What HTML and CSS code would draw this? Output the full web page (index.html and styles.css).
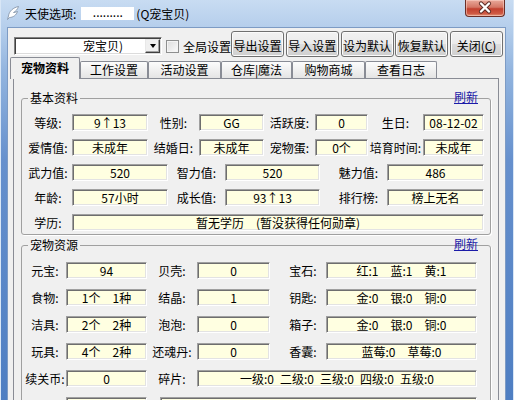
FILE: index.html
```html
<!DOCTYPE html>
<html lang="zh-CN">
<head>
<meta charset="utf-8">
<title>天使选项</title>
<link rel="stylesheet" href="styles.css">
</head>
<body>
<div class="window">
  <div class="titlebar">
    <svg class="appicon" width="16" height="16" viewBox="0 0 16 16">
      <path d="M13.5 1.5 C8.5 2.5 4 6 3.5 11 L2.5 14.5 L4.5 12.5 C8 12.5 11.5 10 12.5 6.5 C11 7.2 9.5 7.5 8.5 7.5 C10.5 6.5 12.5 4.5 13.5 1.5 Z" fill="#ffffff" stroke="#7d8ea3" stroke-width="0.8"/>
    </svg>
    <span class="title">天使选项:</span><span class="redact">.........</span><span class="title">(Q宠宝贝)</span>
    <div class="closebtn">
      <svg width="40" height="17" viewBox="0 0 40 17">
        <path d="M16 4.5 L24 12.5 M24 4.5 L16 12.5" stroke="#5a2a24" stroke-width="4.2" stroke-linecap="round"/>
        <path d="M16 4.5 L24 12.5 M24 4.5 L16 12.5" stroke="#ffffff" stroke-width="2.4" stroke-linecap="round"/>
      </svg>
    </div>
  </div>
  <div class="framebody">
    <div class="client">
      <div class="toolbar">
        <div class="combo"><span class="combo-text">宠宝贝)</span><span class="combo-btn"><span class="arrow"></span></span></div>
        <div class="check"><span class="box"></span><span>全局设置</span></div>
        <div class="btns">
          <button class="btn">导出设置</button>
          <button class="btn">导入设置</button>
          <button class="btn">设为默认</button>
          <button class="btn">恢复默认</button>
          <button class="btn">关闭(<u>C</u>)</button>
        </div>
      </div>
      <div class="tabs">
        <div class="tab sel t1">宠物资料</div>
        <div class="tab t2">工作设置</div>
        <div class="tab t3">活动设置</div>
        <div class="tab t4">仓库|魔法</div>
        <div class="tab t5">购物商城</div>
        <div class="tab t6">查看日志</div>
      </div>
      <div class="panel">
        <fieldset class="group g1">
          <legend>基本资料</legend>
          <a class="refresh">刷新</a>
          <div class="rows">
            <div class="r">
              <span class="l la">等级:</span><span class="f fa">9↑13</span>
              <span class="l lb">性别:</span><span class="f fb">GG</span>
              <span class="l lb">活跃度:</span><span class="f fc">0</span>
              <span class="l lc">生日:</span><span class="f fd">08-12-02</span>
            </div>
            <div class="r">
              <span class="l la">爱情值:</span><span class="f fa">未成年</span>
              <span class="l lb">结婚日:</span><span class="f fb">未成年</span>
              <span class="l lb">宠物蛋:</span><span class="f fc">0个</span>
              <span class="l lc">培育时间:</span><span class="f fd">未成年</span>
            </div>
            <div class="r">
              <span class="l la">武力值:</span><span class="f fe">520</span>
              <span class="l ld">智力值:</span><span class="f ff">520</span>
              <span class="l le">魅力值:</span><span class="f fg">486</span>
            </div>
            <div class="r">
              <span class="l la">年龄:</span><span class="f fe">57小时</span>
              <span class="l ld">成长值:</span><span class="f ff">93↑13</span>
              <span class="l le">排行榜:</span><span class="f fg">榜上无名</span>
            </div>
            <div class="r">
              <span class="l la">学历:</span><span class="f fh">暂无学历&#12288;(暂没获得任何勋章)</span>
            </div>
          </div>
        </fieldset>
        <fieldset class="group g2">
          <legend>宠物资源</legend>
          <a class="refresh">刷新</a>
          <div class="grid">
            <span class="l">元宝:</span><span class="f">94</span>
            <span class="l">贝壳:</span><span class="f">0</span>
            <span class="l l3">宝石:</span><span class="f">红:1&#12288;蓝:1&#12288;黄:1</span>

            <span class="l">食物:</span><span class="f">1个&#12288;1种</span>
            <span class="l">结晶:</span><span class="f">1</span>
            <span class="l l3">钥匙:</span><span class="f">金:0&#12288;银:0&#12288;铜:0</span>

            <span class="l">洁具:</span><span class="f">2个&#12288;2种</span>
            <span class="l">泡泡:</span><span class="f">0</span>
            <span class="l l3">箱子:</span><span class="f">金:0&#12288;银:0&#12288;铜:0</span>

            <span class="l">玩具:</span><span class="f">4个&#12288;2种</span>
            <span class="l">还魂丹:</span><span class="f">0</span>
            <span class="l l3">香囊:</span><span class="f">蓝莓:0&#12288;草莓:0</span>

            <span class="l">续关币:</span><span class="f">0</span>
            <span class="l">碎片:</span><span class="f span">一级:0&ensp;二级:0&ensp;三级:0&ensp;四级:0&ensp;五级:0</span>

            <span class="l"></span><span class="f"></span>
            <span class="f wide"></span>
          </div>
        </fieldset>
      </div>
    </div>
  </div>
</div>
</body>
</html>
```
FILE: styles.css
```css
* { box-sizing: border-box; }
html, body { margin: 0; padding: 0; }
body {
  width: 514px;
  height: 400px;
  overflow: hidden;
  font-family: "Noto Sans CJK SC", "Liberation Sans", sans-serif;
  font-size: 12px;
  color: #000;
  background: #4d7dc2;
}
.window {
  width: 514px;
  height: 400px;
  display: flex;
  flex-direction: column;
  background: linear-gradient(180deg, #c8dcf2 0, #b6cfec 26px, #93b5df 70px, #6690cd 160px, #4e7ec2 400px);
  box-shadow: inset 1px 0 0 #d8e6f6, inset -1px 0 0 #d8e6f6;
}
.titlebar {
  flex: none;
  height: 27px;
  display: flex;
  align-items: center;
  padding-left: 5px;
}
.appicon { flex: none; margin-top: -1px; }
.title { line-height: 14px; white-space: pre; }
.appicon + .title { margin-left: 4px; }
.redact {
  display: inline-block;
  width: 53px;
  height: 13px;
  margin: 0 2px 0 5px;
  background: #fff;
  line-height: 10px;
  text-align: center;
  white-space: nowrap;
}
.closebtn {
  margin-left: auto;
  margin-right: 9px;
  align-self: flex-start;
  width: 40px;
  height: 17px;
  border: 1px solid #6b2f28;
  border-top: none;
  border-radius: 0 0 4px 4px;
  background: linear-gradient(180deg, #e9a99b 0, #d47766 45%, #c2402f 55%, #cf5a44 85%, #e39a7e 100%);
  box-shadow: inset 0 0 0 1px rgba(255, 220, 210, 0.5);
}
.closebtn svg { display: block; margin: -1px 0 0 -1px; }
.framebody {
  flex: 1;
  display: flex;
  padding: 0 8px 0 7px;
  min-height: 0;
}
.client {
  flex: 1;
  display: flex;
  flex-direction: column;
  background: #f0f0f0;
  border: 1px solid #7d9bc4;
  border-bottom: none;
}
.toolbar {
  flex: none;
  height: 26px;
  margin-top: 3px;
  display: flex;
  align-items: flex-start;
  padding-left: 6px;
}
.combo {
  flex: none;
  width: 148px;
  height: 18px;
  margin-top: 6px;
  display: flex;
  background: #fff;
  border: 1px solid;
  border-color: #808080 #ffffff #ffffff #808080;
  box-shadow: inset 1px 1px 0 #404040, inset -1px -1px 0 #dcdcdc;
}
.combo-text {
  flex: 1;
  padding-left: 68px;
  line-height: 16px;
  white-space: nowrap;
  overflow: hidden;
}
.combo-btn {
  flex: none;
  width: 15px;
  height: 14px;
  margin: 1px 1px 0 0;
  background: #f0f0f0;
  border: 1px solid;
  border-color: #e8e8e8 #404040 #404040 #e8e8e8;
  box-shadow: inset -1px -1px 0 #a0a0a0;
  display: flex;
  align-items: center;
  justify-content: center;
}
.arrow {
  width: 0;
  height: 0;
  border-left: 3.5px solid transparent;
  border-right: 3.5px solid transparent;
  border-top: 4px solid #000;
}
.check {
  flex: none;
  display: flex;
  align-items: center;
  height: 18px;
  margin: 6px 0 0 4px;
  white-space: nowrap;
}
.box {
  width: 13px;
  height: 13px;
  margin-right: 4px;
  border: 1px solid #8e8f8f;
  background: linear-gradient(135deg, #dcdcdc, #fbfbfb);
  box-shadow: inset 0 0 0 1px #f4f4f4;
}
.btns {
  display: flex;
  gap: 1.75px;
}
.btn {
  width: 53px;
  height: 26px;
  padding: 2px 0 0;
  margin: 0;
  font-family: "Noto Sans CJK SC", "Liberation Sans", sans-serif;
  font-size: 12px;
  color: #000;
  border: 1px solid #707070;
  border-radius: 3px;
  background: linear-gradient(180deg, #f2f2f2 0%, #ebebeb 48%, #dddddd 52%, #cfcfcf 100%);
  box-shadow: inset 0 0 0 1px #fbfbfb;
  white-space: nowrap;
}
.tabs {
  flex: none;
  height: 21px;
  display: flex;
  align-items: flex-end;
  padding-left: 2px;
  position: relative;
  z-index: 1;
}
.tab {
  flex: none;
  height: 17px;
  display: flex;
  align-items: center;
  justify-content: center;
  border: 1px solid #898c95;
  border-bottom: none;
  border-radius: 2px 2px 0 0;
  background: linear-gradient(180deg, #fcfcfc, #e4e4e4);
  white-space: nowrap;
  line-height: 14px;
}
.tab.sel {
  height: 22px;
  margin-bottom: -1px;
  background: #f0f0f0;
  font-weight: bold;
  padding-bottom: 2px;
}
.t1 { width: 70px; }
.t2 { width: 68px; }
.t3 { width: 73px; }
.t4 { width: 71px; }
.t5 { width: 73px; }
.t6 { width: 72px; }
.panel {
  flex: 1;
  margin: 0 6px 0 5px;
  padding: 12px 7px 0 7px;
  border: 1px solid #898c95;
  border-bottom: none;
  background: #f0f0f0;
}
.group {
  position: relative;
  margin: 0;
  min-inline-size: 0;
  border: 1px solid #a0a0a0;
  border-radius: 3px;
  box-shadow: 1px 1px 0 #ffffff;
}
.group legend {
  margin-left: 4px;
  padding: 0 2px;
  line-height: 14px;
  font-size: 12px;
}
.g1 { padding: 9px 6px 3px 2px; }
.g2 { padding: 10px 6px 3px 2px; margin-top: 3px; }
.refresh {
  position: absolute;
  right: 12px;
  top: -15px;
  line-height: 14px;
  color: #1b1ba8;
  text-decoration: underline;
  cursor: pointer;
}
.rows {
  display: flex;
  flex-direction: column;
  gap: 8px;
}
.r {
  display: flex;
  height: 17px;
}
.l {
  flex: none;
  text-align: center;
  line-height: 17px;
  white-space: nowrap;
}
.f {
  flex: none;
  height: 17px;
  background: #ffffe1;
  border: 1px solid;
  border-color: #a0a0a0 #ffffff #ffffff #a0a0a0;
  box-shadow: inset 1px 1px 0 #6e6e6e, inset -1px -1px 0 #e3e3e3;
  text-align: center;
  line-height: 15px;
  white-space: pre;
  overflow: hidden;
}
.la { width: 48px; }
.lb { width: 51px; }
.lc { width: 55px; }
.ld { width: 57px; }
.le { width: 67px; padding-left: 10px; }
.fa { width: 76px; }
.fb { width: 65px; }
.fc { width: 53px; }
.fd { width: 61px; }
.fe { width: 96px; }
.ff { width: 95px; }
.fg { width: 97px; }
.fh { width: 412px; }
.grid {
  display: grid;
  grid-template-columns: 42px 81px 50px 73px 56px 151px;
  grid-auto-rows: 17px;
  row-gap: 10px;
}
.l3 { padding-left: 10px; }
.span { grid-column: 4 / 7; }
.wide { grid-column: 3 / 7; margin-left: 13px; }
```
